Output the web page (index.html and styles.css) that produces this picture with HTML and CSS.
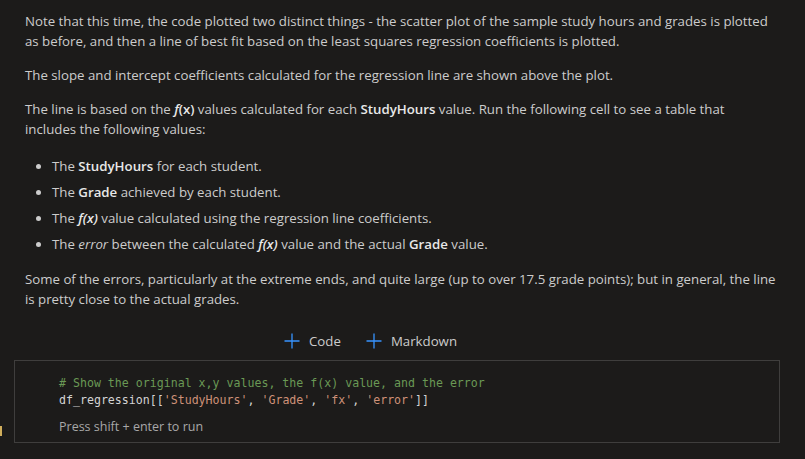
FILE: index.html
```html
<!DOCTYPE html>
<html>
<head>
<meta charset="utf-8">
<link rel="stylesheet" href="styles.css">
</head>
<body>
<div class="notebook">
  <div class="markdown">
    <p>Note that this time, the code plotted two distinct things - the scatter plot of the sample study hours and grades is plotted<br>as before, and then a line of best fit based on the least squares regression coefficients is plotted.</p>
    <p>The slope and intercept coefficients calculated for the regression line are shown above the plot.</p>
    <p>The line is based on the <b><i>f</i>(x)</b> values calculated for each <b>StudyHours</b> value. Run the following cell to see a table that<br>includes the following values:</p>
    <ul>
      <li>The <b>StudyHours</b> for each student.</li>
      <li>The <b>Grade</b> achieved by each student.</li>
      <li>The <b><i>f(x)</i></b> value calculated using the regression line coefficients.</li>
      <li>The <i>error</i> between the calculated <b><i>f(x)</i></b> value and the actual <b>Grade</b> value.</li>
    </ul>
    <p>Some of the errors, particularly at the extreme ends, and quite large (up to over 17.5 grade points); but in general, the line<br>is pretty close to the actual grades.</p>
  </div>
  <div class="add-row">
    <span class="add-btn"><svg class="plus" viewBox="0 0 16 16" width="16" height="16"><path d="M8 0.5V15.5M0.5 8H15.5" stroke="#3794ff" stroke-width="1.3" fill="none"/></svg>Code</span>
    <span class="add-btn"><svg class="plus" viewBox="0 0 16 16" width="16" height="16"><path d="M8 0.5V15.5M0.5 8H15.5" stroke="#3794ff" stroke-width="1.3" fill="none"/></svg>Markdown</span>
  </div>
  <div class="cell-row">
    <div class="marker"></div>
    <div class="code-cell">
      <pre class="code"><span class="cm"># Show the original x,y values, the f(x) value, and the error</span>
df_regression<span class="br">[[</span><span class="st">'StudyHours'</span>, <span class="st">'Grade'</span>, <span class="st">'fx'</span>, <span class="st">'error'</span><span class="br">]]</span></pre>
      <div class="hint">Press shift + enter to run</div>
    </div>
  </div>
</div>
</body>
</html>
```

FILE: styles.css
```css
html, body {
  margin: 0;
  padding: 0;
  background: #1c1b1a;
}
.notebook {
  width: 805px;
  height: 459px;
  overflow: hidden;
  font-family: "Segoe UI", "Open Sans", "Noto Sans", sans-serif;
  font-size: 13.25px;
  line-height: 20px;
  color: #cccccc;
}
.markdown {
  padding: 11px 0 0 25px;
}
.markdown p {
  margin: 0 0 14px 0;
  white-space: nowrap;
}
.markdown b {
  color: #e8e8e8;
  font-weight: 600;
}
.markdown ul {
  margin: 17px 0 0 0;
  padding-left: 27px;
}
.markdown li {
  margin-bottom: 6px;
}
.markdown ul + p {
  margin-top: 15px;
}
.add-row {
  display: flex;
  gap: 25px;
  margin-top: 22px;
  padding-left: 284px;
}
.add-btn {
  display: flex;
  align-items: center;
  gap: 9px;
  color: #cccccc;
}
.plus {
  display: block;
}
.cell-row {
  display: flex;
  align-items: flex-start;
  margin-top: 9px;
}
.marker {
  width: 2px;
  height: 10px;
  background: #d0ae5c;
  margin-top: 66px;
  margin-right: 12px;
}
.code-cell {
  width: 766px;
  border: 1px solid #3f3e3d;
  padding: 14px 0 8px 44px;
  box-sizing: border-box;
  height: 83px;
}
.code {
  margin: 0;
  font-family: "DejaVu Sans Mono", monospace;
  font-size: 11.6px;
  line-height: 17px;
  color: #d4d4d4;
}
.cm { color: #6a9955; }
.st { color: #ce9178; }
.br { color: #d4d4d4; }
.hint {
  margin-top: 9px;
  font-size: 12.5px;
  line-height: 18px;
  color: #a8a8a8;
}
```
